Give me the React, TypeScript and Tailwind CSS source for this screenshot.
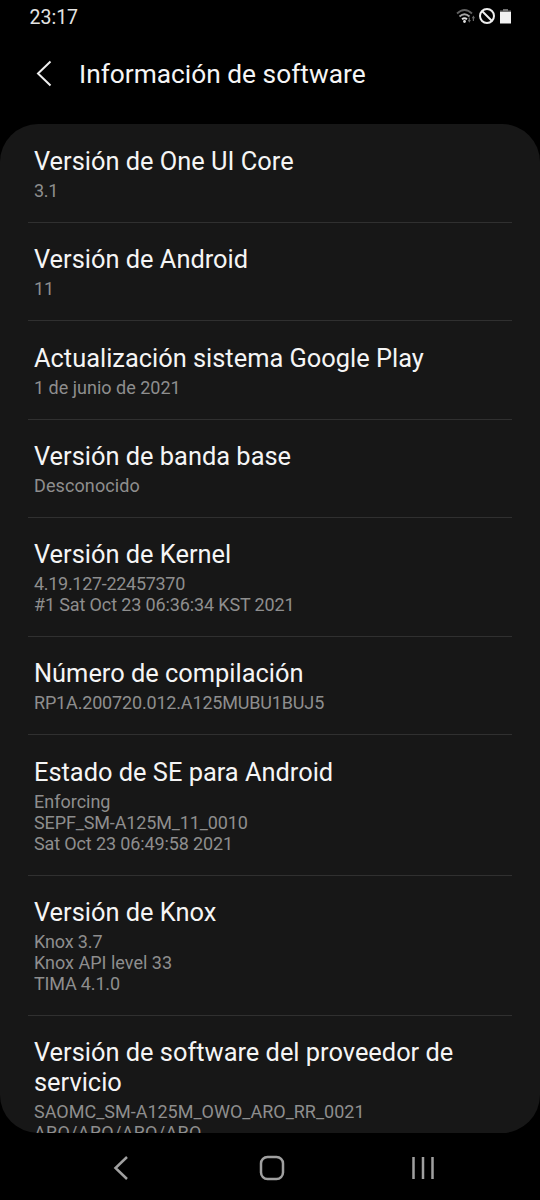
interface InfoLine {
	text: string;
	tracking?: string;
}

interface InfoItem {
	title: string;
	lines: InfoLine[];
}

const ITEMS: InfoItem[] = [
	{ title: "Versión de One UI Core", lines: [{ text: "3.1", tracking: "tracking-[-0.3px]" }] },
	{ title: "Versión de Android", lines: [{ text: "11" }] },
	{
		title: "Actualización sistema Google Play",
		lines: [{ text: "1 de junio de 2021" }],
	},
	{
		title: "Versión de banda base",
		lines: [{ text: "Desconocido", tracking: "tracking-[0.1px]" }],
	},
	{
		title: "Versión de Kernel",
		lines: [
			{ text: "4.19.127-22457370", tracking: "tracking-[-0.3px]" },
			{ text: "#1 Sat Oct 23 06:36:34 KST 2021", tracking: "tracking-[-0.13px]" },
		],
	},
	{
		title: "Número de compilación",
		lines: [{ text: "RP1A.200720.012.A125MUBU1BUJ5", tracking: "tracking-[-0.17px]" }],
	},
	{
		title: "Estado de SE para Android",
		lines: [
			{ text: "Enforcing" },
			{ text: "SEPF_SM-A125M_11_0010", tracking: "tracking-[-0.13px]" },
			{ text: "Sat Oct 23 06:49:58 2021", tracking: "tracking-[-0.13px]" },
		],
	},
	{
		title: "Versión de Knox",
		lines: [
			{ text: "Knox 3.7", tracking: "tracking-[-0.13px]" },
			{ text: "Knox API level 33" },
			{ text: "TIMA 4.1.0", tracking: "tracking-[-0.17px]" },
		],
	},
	{
		title: "Versión de software del proveedor de servicio",
		lines: [
			{ text: "SAOMC_SM-A125M_OWO_ARO_RR_0021" },
			{ text: "ARO/ARO/ARO/ARO", tracking: "tracking-[0.3px]" },
		],
	},
];

function StatusBar() {
	return (
		<div className="flex h-9 shrink-0 items-center justify-between pr-[29px] pb-px pl-[29.5px] text-[19.5px] text-[#e4e4e4]">
			<span>23:17</span>
			<div className="flex items-center pb-1">
				<svg aria-hidden="true" className="mr-[3px] h-4 w-5" viewBox="0 0 20 16" fill="none">
					<path stroke="#606060" strokeWidth={1.8} d="M1 5.500q7.500-7 15 0" />
					<path stroke="#a5a5a5" strokeWidth={1.8} d="M3.500 8.500q5-4.500 10 0" />
					<path stroke="#e0e0e0" strokeWidth={1.800} d="M6 11.300q2.500-2.200 5 0" />
					<circle cx="8.500" cy="13.500" r="1.400" fill="#e0e0e0" />
					<path fill="#666" d="M11.700 12h1V9.500h1.200V12h1l-1.600 2.800zM15.700 10.300h1.100V13H18v-2.700h1.100L17.400 7.500z" />
				</svg>
				<svg aria-hidden="true" className="mr-[5px] size-4" viewBox="0 0 16 16" fill="none" stroke="#eee" strokeWidth={2}>
					<circle cx="8" cy="8" r="7" />
					<path d="M3 3l10 10" />
				</svg>
				<svg aria-hidden="true" className="h-4 w-[11px]" viewBox="0 0 11 16">
					<path fill="#707070" d="M3 1h5v1.500h3V4H0V2.500h3z" />
					<path fill="#f2f2f2" d="M0 4h11v11.500H0z" />
				</svg>
			</div>
		</div>
	);
}

function Row({ item }: { item: InfoItem }) {
	return (
		<li className="mx-7 border-b border-[#303030] px-1.5 pt-[21.25px] pb-[21px] last:border-b-0">
			<h2 className="text-[25.4px] leading-[30px] text-[#f5f5f5]">{item.title}</h2>
			<div className="mt-1 text-[18px] leading-[21px] text-[#8e8e8e]">
				{item.lines.map((line) => (
					<p key={line.text} className={line.tracking}>
						{line.text}
					</p>
				))}
			</div>
		</li>
	);
}

export default function App() {
	return (
		<div className="flex h-[1200px] w-[540px] flex-col overflow-hidden bg-black font-[Roboto,sans-serif]">
			<StatusBar />
			<header className="flex h-[88px] shrink-0 items-center pb-3 pl-9">
				<svg aria-hidden="true" className="mr-[27px] h-7 w-4" viewBox="0 0 16 28" fill="none" stroke="#eee" strokeWidth={2}>
					<path d="M14.500 1.500L2 13.500l12.500 12" />
				</svg>
				<h1 className="pt-px text-[26.3px] text-[#f5f5f5]">Información de software</h1>
			</header>
			<ul className="h-[1008.5px] shrink-0 overflow-hidden rounded-[38px] bg-[#171717] pt-[0.75px]">
				{ITEMS.map((item) => (
					<Row key={item.title} item={item} />
				))}
			</ul>
			<nav className="flex flex-1 items-center pt-[3px] pl-[113px]">
				<svg aria-hidden="true" className="mr-[130px] h-6 w-4" viewBox="0 0 16 24" fill="none" stroke="#a0a0a0" strokeWidth={2.5}>
					<path d="M14 1L2.500 12 14 23" />
				</svg>
				<svg aria-hidden="true" className="mr-[126px] size-[26px]" viewBox="0 0 26 26" fill="none" stroke="#a0a0a0" strokeWidth={2.5}>
					<rect x="2" y="2" width="22" height="22" rx="6.500" />
				</svg>
				<svg aria-hidden="true" className="size-6" viewBox="0 0 24 24" fill="none" stroke="#a0a0a0" strokeWidth={2.5}>
					<path d="M2.500 1v22M12 1v22M21.500 1v22" />
				</svg>
			</nav>
		</div>
	);
}
